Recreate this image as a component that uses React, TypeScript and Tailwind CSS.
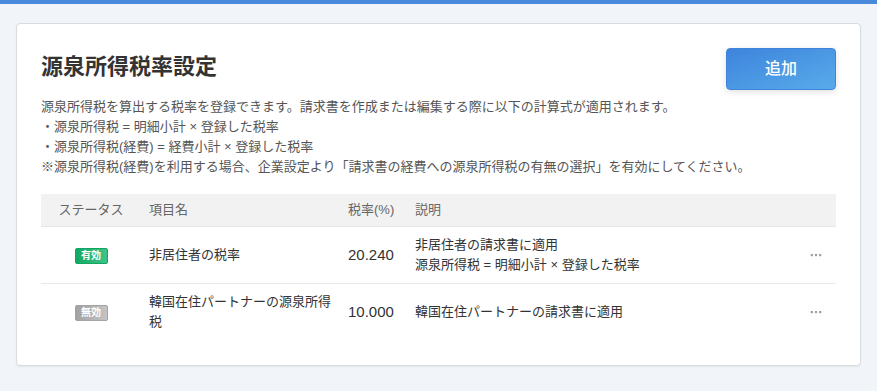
const FONT = "font-['Liberation_Sans','Noto_Sans_CJK_JP',sans-serif]";

type Rate = {
  id: number;
  active: boolean;
  name: string;
  rate: string;
  desc: string[];
};

const rates: Rate[] = [
  {
    id: 1,
    active: true,
    name: '非居住者の税率',
    rate: '20.240',
    desc: ['非居住者の請求書に適用', '源泉所得税 = 明細小計 × 登録した税率'],
  },
  {
    id: 2,
    active: false,
    name: '韓国在住パートナーの源泉所得税',
    rate: '10.000',
    desc: ['韓国在住パートナーの請求書に適用'],
  },
];

function StatusBadge({ active }: { active: boolean }) {
  return active ? (
    <span className="inline-flex h-4 w-[33px] items-center justify-center rounded-[2px] border border-[#12a462] bg-gradient-to-r from-[#10a863] to-[#3ec489] text-[10px] font-bold leading-none text-white">
      有効
    </span>
  ) : (
    <span className="inline-flex h-4 w-[33px] items-center justify-center rounded-[2px] border border-[#a3a3a3] bg-gradient-to-r from-[#a2a2a2] to-[#c4c4c4] text-[10px] font-bold leading-none text-white">
      無効
    </span>
  );
}

function MoreDots() {
  return (
    <svg width="12" height="4" viewBox="0 0 12 4" className="mx-auto">
      <rect x="0.75" y="1" width="2.2" height="2.2" fill="#a0a0a0" />
      <rect x="4.9" y="1" width="2.2" height="2.2" fill="#a0a0a0" />
      <rect x="9.05" y="1" width="2.2" height="2.2" fill="#a0a0a0" />
    </svg>
  );
}

export default function App() {
  return (
    <div className={`min-h-[391px] bg-[#f1f4f8] ${FONT}`}>
      <div className="h-1 bg-[#4a88dc]" />
      <div className="px-4 pt-[19px] pb-[27px]">
        <div className="rounded-[4px] border border-[#d9dcdf] bg-white px-6 pt-6 pb-[25px] shadow-[0_1px_2px_rgba(0,0,0,0.06)]">
          <div className="flex h-[42px] items-center justify-between">
            <h2 className="text-[22px] font-bold leading-none text-[#333] -mt-1">源泉所得税率設定</h2>
            <button
              type="button"
              className="h-[42px] w-[110px] rounded-[4px] border border-[#3f83dc] bg-gradient-to-br from-[#3e84dc] to-[#58abea] text-[16px] font-medium text-white shadow-[0_2px_6px_rgba(0,0,0,0.12)]"
            >
              追加
            </button>
          </div>

          <div className="mt-[7px] text-[13px] leading-5 text-[#555]">
            <p>源泉所得税を算出する税率を登録できます。請求書を作成または編集する際に以下の計算式が適用されます。</p>
            <p>・源泉所得税 = 明細小計 × 登録した税率</p>
            <p>・源泉所得税(経費) = 経費小計 × 登録した税率</p>
            <p>※源泉所得税(経費)を利用する場合、企業設定より「請求書の経費への源泉所得税の有無の選択」を有効にしてください。</p>
          </div>

          <table className="mt-[17px] w-full table-fixed border-collapse text-[13px] leading-5">
            <colgroup>
              <col className="w-[100px]" />
              <col className="w-[199px]" />
              <col className="w-[67px]" />
              <col />
              <col className="w-[40px]" />
            </colgroup>
            <thead>
              <tr className="h-8 border-b border-[#e6e6e6] bg-[#f2f2f2] text-[#666]">
                <th className="px-2 text-center font-normal">ステータス</th>
                <th className="px-2 text-left font-normal">項目名</th>
                <th className="px-2 text-left font-normal">税率(%)</th>
                <th className="px-2 text-left font-normal">説明</th>
                <th />
              </tr>
            </thead>
            <tbody className="text-[#333]">
              {rates.map((r, i) => (
                <tr key={r.id} className={i < rates.length - 1 ? 'border-b border-[#e8e8e8]' : ''}>
                  <td className="h-[57px] px-2 py-[8px] text-center align-middle">
                    <div className="flex justify-center pt-[2px]">
                      <StatusBadge active={r.active} />
                    </div>
                  </td>
                  <td className="px-2 py-[8px] align-middle">{r.name}</td>
                  <td className="px-2 py-[8px] align-middle text-[15px]">{r.rate}</td>
                  <td className="px-2 py-[8px] align-middle">
                    {r.desc.map((d) => (
                      <div key={d}>{d}</div>
                    ))}
                  </td>
                  <td className="align-middle">
                    <MoreDots />
                  </td>
                </tr>
              ))}
            </tbody>
          </table>
        </div>
      </div>
    </div>
  );
}
